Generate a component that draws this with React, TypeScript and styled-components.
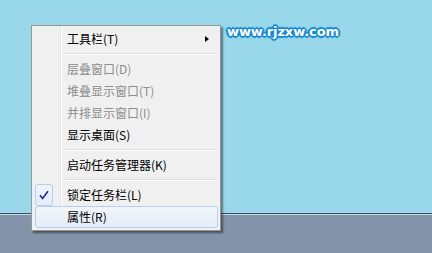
import React from 'react';
import styled, { createGlobalStyle } from 'styled-components';

const GlobalStyle = createGlobalStyle`
  html, body {
    margin: 0;
    padding: 0;
    width: 432px;
    height: 253px;
    overflow: hidden;
  }
  body {
    font-family: "Noto Sans CJK SC", "Noto Sans", sans-serif;
  }
`;

const Screen = styled.div`
  position: relative;
  width: 432px;
  height: 253px;
  display: flex;
  flex-direction: column;
`;

const Desktop = styled.div`
  height: 213px;
  background: #98d8ea;
`;

const Taskbar = styled.div`
  flex: 1;
  background: #8394aa;
  border-top: 1px solid #3d4e5f;
  box-shadow: inset 0 1px 0 #c9d6e3;
`;

const Watermark = styled.div`
  position: absolute;
  left: 227px;
  top: 24px;
  font-family: "DejaVu Sans", sans-serif;
  font-weight: bold;
  font-size: 13px;
  color: #fff;
  letter-spacing: -0.1px;
  text-shadow:
    1px 0 0 #1587d2, -1px 0 0 #1587d2, 0 1px 0 #1587d2, 0 -1px 0 #1587d2,
    1px 1px 0 #1587d2, -1px -1px 0 #1587d2, 1px -1px 0 #1587d2, -1px 1px 0 #1587d2,
    2px 0 1px #1587d2, 0 2px 1px #1587d2, -2px 0 1px #1587d2, 0 -2px 1px #1587d2;
`;

const Menu = styled.div`
  position: absolute;
  left: 31px;
  top: 25px;
  width: 183px;
  padding: 2px 2px 2px 3px;
  background-color: #f0f0f0;
  background-image: linear-gradient(
    to right,
    transparent 28px,
    #e2e3e3 28px,
    #e2e3e3 29px,
    #ffffff 29px,
    #ffffff 30px,
    transparent 30px
  );
  border: 1px solid #979797;
  box-shadow: 2px 2px 2px rgba(0, 0, 0, 0.45);
`;

const Item = styled.div<{ $disabled?: boolean; $hot?: boolean }>`
  position: relative;
  height: 22px;
  box-sizing: border-box;
  display: flex;
  align-items: center;
  padding-left: 31px;
  font-size: 12px;
  color: ${(p) => (p.$disabled ? '#8d8d8d' : '#000')};
  border-radius: 3px;
  border: 1px solid ${(p) => (p.$hot ? '#b4cff3' : 'transparent')};
  background: ${(p) =>
    p.$hot ? 'linear-gradient(to bottom, #f1f5fb, #e6edf8)' : 'transparent'};
  line-height: 20px;
`;

const Separator = styled.div`
  height: 8px;
  margin-left: 28px;
  display: flex;
  align-items: center;
  &::after {
    content: '';
    display: block;
    width: 100%;
    height: 2px;
    box-sizing: border-box;
    border-top: 1px solid #e0e0e0;
    border-bottom: 1px solid #ffffff;
  }
`;

const Arrow = styled.span`
  position: absolute;
  right: 8px;
  top: 7px;
  width: 0;
  height: 0;
  border-top: 3.5px solid transparent;
  border-bottom: 3.5px solid transparent;
  border-left: 4px solid #000;
`;

const CheckBox = styled.span`
  position: absolute;
  left: -1px;
  top: -1px;
  width: 16px;
  height: 20px;
  border: 1px solid #b4cff3;
  border-radius: 3px;
  background: linear-gradient(to bottom, #f1f5fb, #e4ecf8);
  display: flex;
  align-items: center;
  justify-content: center;
`;

const Check = () => (
  <svg width="10" height="10" viewBox="0 0 10 10">
    <path d="M1 5.2 L3.6 8.4 L9 1.2" fill="none" stroke="#1b2d8f" strokeWidth="1.6" />
  </svg>
);

export default function App() {
  return (
    <>
      <GlobalStyle />
      <Screen>
        <Desktop />
        <Taskbar />
        <Watermark>www.rjzxw.com</Watermark>
        <Menu>
          <Item>
            工具栏(T)
            <Arrow />
          </Item>
          <Separator />
          <Item $disabled>层叠窗口(D)</Item>
          <Item $disabled>堆叠显示窗口(T)</Item>
          <Item $disabled>并排显示窗口(I)</Item>
          <Item>显示桌面(S)</Item>
          <Separator />
          <Item>启动任务管理器(K)</Item>
          <Separator />
          <Item>
            <CheckBox>
              <Check />
            </CheckBox>
            锁定任务栏(L)
          </Item>
          <Item $hot>属性(R)</Item>
        </Menu>
      </Screen>
    </>
  );
}
